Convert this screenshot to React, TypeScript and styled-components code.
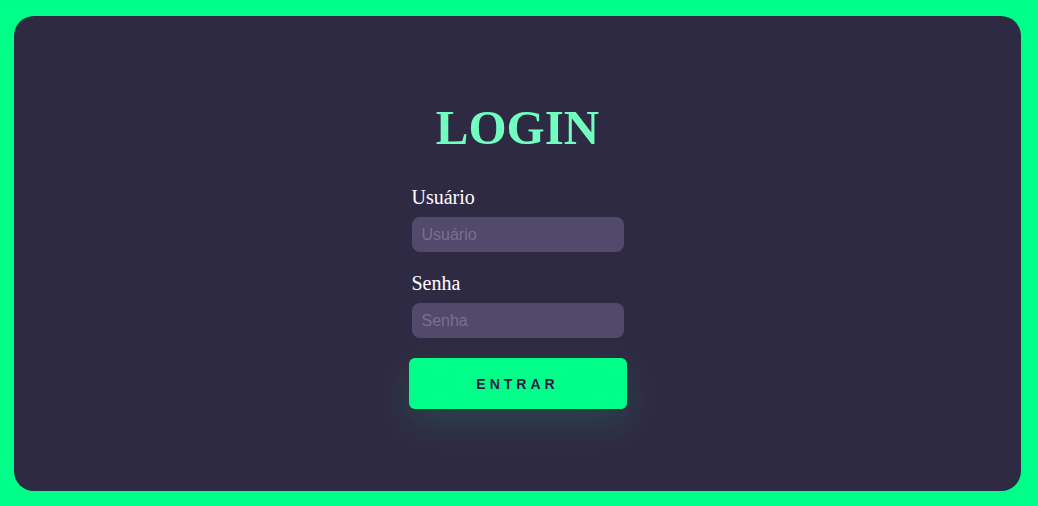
import React from "react";
import styled, { createGlobalStyle } from "styled-components";

const Global = createGlobalStyle`
  html, body { margin: 0; padding: 0; background: #00ff88; }
  body { font-family: "Liberation Serif", "Times New Roman", serif; }
`;

const Page = styled.div`
  padding: 16px 17px 15px 14px;
  height: 506px;
  box-sizing: border-box;
  display: flex;
`;

const Card = styled.main`
  flex: 1;
  background: #2f2a43;
  border-radius: 20px;
  display: flex;
  flex-direction: column;
  align-items: center;
  padding-top: 84px;
`;

const Title = styled.h1`
  margin: 0;
  font-family: "Liberation Serif", "Times New Roman", serif;
  font-size: 49px;
  font-weight: 700;
  color: #70ffc0;
  line-height: 55px;
`;

const Form = styled.form`
  width: 212px;
  margin-top: 31px;
  display: flex;
  flex-direction: column;
`;

const Field = styled.div<{ $mb: number }>`
  display: flex;
  flex-direction: column;
  gap: 8px;
  margin-bottom: ${(p) => p.$mb}px;
`;

const Label = styled.label`
  font-family: "Liberation Serif", "Times New Roman", serif;
  font-size: 20px;
  line-height: 23px;
  color: #ffffff;
`;

const Input = styled.input`
  box-sizing: border-box;
  width: 100%;
  height: 35px;
  border: none;
  outline: none;
  border-radius: 8px;
  background: #53496b;
  padding: 0 10px;
  font-family: "Liberation Sans", Arial, sans-serif;
  font-size: 16px;
  color: #fff;
  &::placeholder { color: #78718a; }
`;

const Button = styled.button`
  margin: 0 -3px;
  height: 51px;
  border: none;
  border-radius: 6px;
  background: #00ff88;
  color: #2e1a4a;
  font-family: "Liberation Sans", Arial, sans-serif;
  font-weight: 700;
  font-size: 14px;
  letter-spacing: 4px;
  cursor: pointer;
  box-shadow: 0 14px 36px rgba(0, 255, 136, 0.12);
`;

export default function App() {
  return (
    <>
      <Global />
      <Page>
        <Card>
          <Title>LOGIN</Title>
          <Form onSubmit={(e) => e.preventDefault()}>
            <Field $mb={20}>
              <Label htmlFor="u">Usuário</Label>
              <Input id="u" placeholder="Usuário" />
            </Field>
            <Field $mb={20}>
              <Label htmlFor="s">Senha</Label>
              <Input id="s" type="password" placeholder="Senha" />
            </Field>
            <Button type="submit">ENTRAR</Button>
          </Form>
        </Card>
      </Page>
    </>
  );
}
